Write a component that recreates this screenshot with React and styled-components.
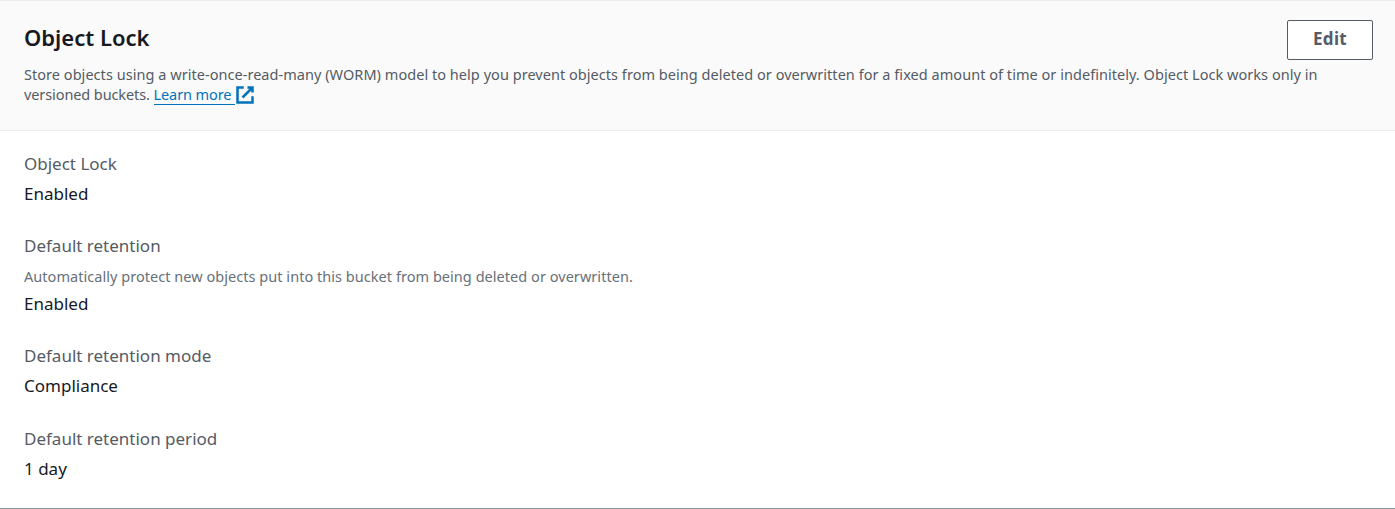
import React from "react";
import styled, { createGlobalStyle } from "styled-components";

const Global = createGlobalStyle`
  * { box-sizing: border-box; }
  body { margin: 0; background: #fff; font-family: "Noto Sans", "Open Sans", sans-serif; color: #16191f; }
`;
const Panel = styled.section`
  height: 509px;
  border-top: 1px solid #eaeded;
  border-bottom: 1px solid #879596;
  background: #fff;
`;
const Header = styled.header`
  height: 130px;
  padding: 19px 22px 0 24px;
  background: #fafafa;
  border-bottom: 1px solid #eaeded;
  display: flex;
  justify-content: space-between;
  align-items: flex-start;
`;
const HeaderText = styled.div`
  flex: 1;
  min-width: 0;
`;
const Line = styled.span`
  display: block;
  white-space: nowrap;
  width: max-content;
  letter-spacing: ${(p) => p.$spacing || "0"};
`;
const Title = styled.h2`
  margin: 0;
  font-size: 22px;
  line-height: 34px;
  font-weight: 600;
`;
const Description = styled.p`
  margin: 10px 0 0;
  font-size: 14.5px;
  line-height: 20px;
  color: #545b64;
`;
const Link = styled.a`
  color: #0073bb;
  text-decoration: none;
  border-bottom: 1px solid #0073bb;
`;
const LinkIcon = styled.svg`
  width: 20px;
  height: 20px;
  margin: 1px 0 -1px;
  vertical-align: top;
`;
const Button = styled.button`
  width: 86px;
  height: 40px;
  padding: 0 0 3px;
  border: 1px solid #545b64;
  border-radius: 2px;
  background: #fff;
  color: #545b64;
  font: 700 17px "Noto Sans", sans-serif;
  letter-spacing: 0.3px;
`;
const Fields = styled.dl`
  margin: 0;
  padding: 18px 24px;
  display: flex;
  flex-direction: column;
  gap: 22.2px;
`;
const Field = styled.div`
  display: flex;
  flex-direction: column;
`;
const Label = styled.dt`
  font-size: 17px;
  line-height: 30px;
  color: #545b64;
`;
const Hint = styled.dd`
  margin: 1px 0 -1px;
  font-size: 14.5px;
  line-height: 28px;
  color: #687078;
`;
const Value = styled.dd`
  margin: 0;
  font-size: 17px;
  line-height: 30px;
`;

const fields = [
  { label: "Object Lock", value: "Enabled" },
  { label: "Default retention", hint: "Automatically protect new objects put into this bucket from being deleted or overwritten.", value: "Enabled" },
  { label: "Default retention mode", value: "Compliance" },
  { label: "Default retention period", value: "1 day" },
];

export default function App() {
  return (
    <>
      <Global />
      <Panel>
        <Header>
          <HeaderText>
            <Title><Line>Object Lock</Line></Title>
            <Description>
              <Line $spacing="0.04px">Store objects using a write-once-read-many (WORM) model to help you prevent objects from being deleted or overwritten for a fixed amount of time or indefinitely. Object Lock works only in</Line>
              <Line $spacing="-0.1px">
                versioned buckets. <Link href="#">Learn more </Link>
                <LinkIcon viewBox="0 0 16 16" fill="none" stroke="#0073bb" strokeWidth="2">
                  <path d="M10 2h4v4M6 10l8-8M14 9.05V14H2V2h5" />
                </LinkIcon>
              </Line>
            </Description>
          </HeaderText>
          <Button>Edit</Button>
        </Header>
        <Fields>
          {fields.map((f) => (
            <Field key={f.label}>
              <Label><Line>{f.label}</Line></Label>
              {f.hint && <Hint><Line $spacing="0.04px">{f.hint}</Line></Hint>}
              <Value><Line>{f.value}</Line></Value>
            </Field>
          ))}
        </Fields>
      </Panel>
    </>
  );
}
